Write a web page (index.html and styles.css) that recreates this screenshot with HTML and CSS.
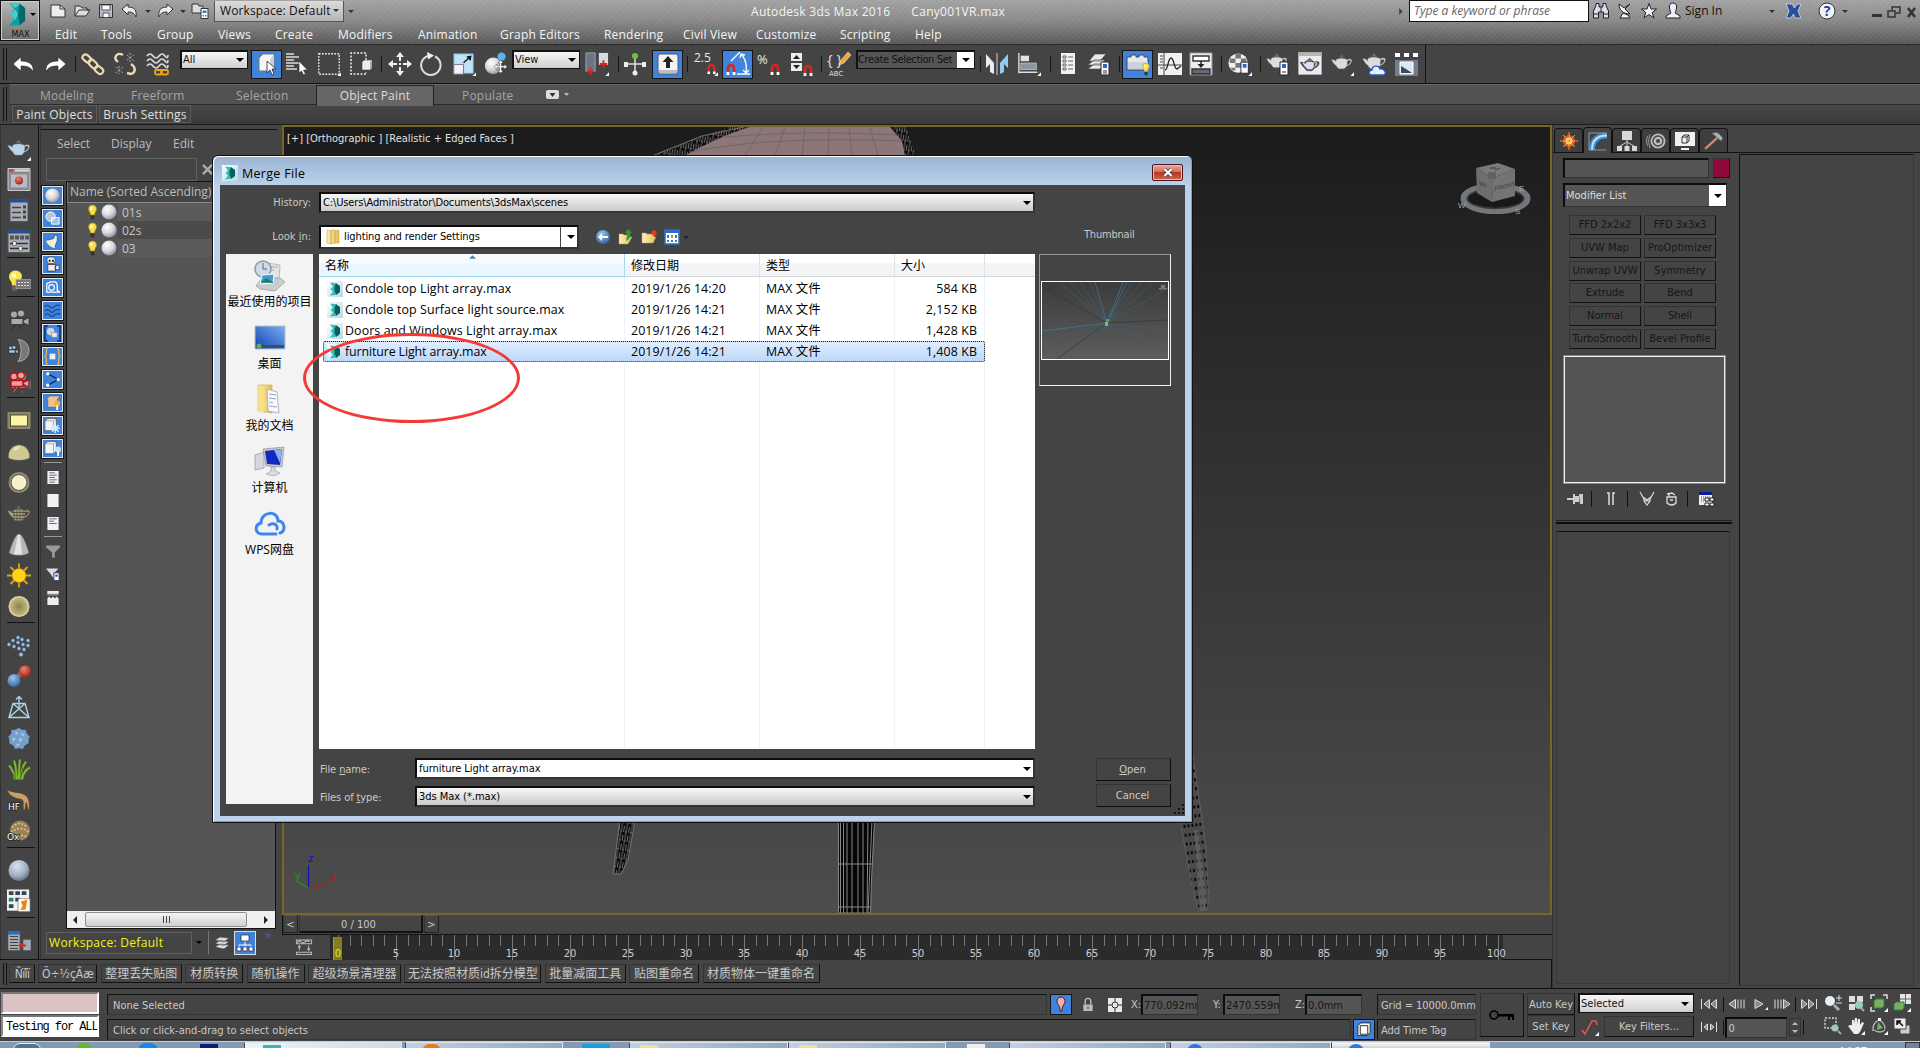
FILE: index.html
```html
<!DOCTYPE html>
<html lang="en">
<head>
<meta charset="utf-8">
<title>Autodesk 3ds Max 2016 - Cany001VR.max</title>
<link rel="stylesheet" href="styles.css">
</head>
<body>
<svg class="defs" width="0" height="0" aria-hidden="true">
  <defs>
    <linearGradient id="gTeal" x1="0" x2="1"><stop offset="0" stop-color="#3cc6bf"/><stop offset="1" stop-color="#067a80"/></linearGradient>
    <radialGradient id="gBall" cx=".38" cy=".32" r=".75"><stop offset="0" stop-color="#fff"/><stop offset=".55" stop-color="#d5d5dc"/><stop offset="1" stop-color="#85858c"/></radialGradient>
    <radialGradient id="gSteel" cx=".4" cy=".3" r=".75"><stop offset="0" stop-color="#d8e2ee"/><stop offset=".6" stop-color="#a3b1c3"/><stop offset="1" stop-color="#5f6c7e"/></radialGradient>
    <radialGradient id="gRed" cx=".4" cy=".3" r=".8"><stop offset="0" stop-color="#f08070"/><stop offset="1" stop-color="#8c1a10"/></radialGradient>
    <radialGradient id="gBlue" cx=".4" cy=".3" r=".8"><stop offset="0" stop-color="#9cc8ee"/><stop offset="1" stop-color="#2a5a92"/></radialGradient>
    <radialGradient id="gDisc"><stop offset="0" stop-color="#8d8550"/><stop offset=".75" stop-color="#b9b27a"/><stop offset="1" stop-color="#e8e3b4"/></radialGradient>
    <linearGradient id="gScreen" x1="0" y1="1" x2="1" y2="0"><stop offset="0" stop-color="#123fae"/><stop offset="1" stop-color="#79b0f2"/></linearGradient>
    <linearGradient id="gFolder" x1="0" x2="1"><stop offset="0" stop-color="#fff0b0"/><stop offset="1" stop-color="#e3bf55"/></linearGradient>
    <linearGradient id="gIce" x1="0" y1="0" x2="1" y2="1"><stop offset="0" stop-color="#ffffff"/><stop offset="1" stop-color="#b4d9e6"/></linearGradient>
  </defs>
  <symbol id="logo" viewBox="0 0 16 16"><path fill="url(#gIce)" d="M0 0h16v16H0z"/><path fill="#35bdb6" d="M3 1.500l6.500.8L12 5v6l-2.500 2.800L3 14.500l3-4L3.500 8 6 5.500z"/><path fill="#075f66" d="M9 2.300L13 5v6l-3.600 2.800L7.500 10V6z"/></symbol>
  <symbol id="teapot" viewBox="0 0 24 24"><path stroke="#555" stroke-width=".6" d="M6 9.500C7 7.500 16 7.500 17 9.500c3-1.800 6-.5 4.600 2.500-.8 1.800-2.500 3.300-5 4.200-.6 1.300-1.800 2.300-2.600 2.600H9C7.500 18 6.500 17 6.200 15.600 4 14.800 3 12 1.300 9.800 3 8.800 5 9.800 5.700 11.200zM17.500 11c.2 1.400 0 2.600-.4 3.700 2-.9 3.300-2.300 3.400-3.400 0-1.200-1.600-1.200-3-.3zM8.500 7.400c1.500-.9 5-.9 6.200 0zM10.600 6.500c0-1.700 2-1.700 2 0z"/></symbol>
  <symbol id="magnet" viewBox="0 0 10 12"><path fill="none" stroke="#d8281e" stroke-width="2.600" d="M2 9V5a3 3 0 016 0v4"/><path fill="#fff" d="M.6 9h2.800v3H.6zM6.600 9h2.800v3H6.600z"/></symbol>
  <symbol id="cam" viewBox="0 0 24 24"><circle cx="7" cy="7" r="3.600"/><circle cx="14" cy="6" r="3.600"/><path d="M4 11h12v6H4zM16 13l6-3v8l-6-3zM9 17l-4 5M11 17l4 5"/></symbol>
  <symbol id="box3" viewBox="0 0 20 18"><path fill="#f4f4f6" stroke="#444" stroke-width=".7" d="M4 4l3-2.500h9V12l-3 2.500H4z"/><path fill="none" stroke="#888" stroke-width=".7" d="M4 4h9v10.500M13 4l3-2.500"/></symbol>
  <symbol id="bulb" viewBox="0 0 12 16"><path fill="#f6df50" stroke="#a98c10" stroke-width=".6" d="M6 1a4 4 0 00-4 4c0 2 2 3.500 2 6h4c0-2.500 2-4 2-6a4 4 0 00-4-4z"/><path fill="#333" d="M4 11.500h4V14l-1 1.500H5L4 14z"/><path fill="#fffbd0" d="M4 3h2v3H4z"/></symbol>
  <symbol id="page" viewBox="0 0 14 16"><path fill="#f2f2f4" stroke="#333c48" d="M.5.500h13v15H.5z"/></symbol>
</svg>

<header class="titlebar">
  <div class="appbtn"><svg class="applogo" viewBox="0 0 22 28"><path fill="#0aa29f" d="M1 1l12 1 6 5v14l-6 5-12 1 6-8-5-5 5-6z"/><path fill="#45d0c6" d="M1 1l12 1-5 5zM2 14l6-6 3 6-3 6z"/><path fill="#05676c" d="M13 2l6 5v14l-6 5-2-12z"/></svg><b>MAX</b><i class="caret"></i></div>
  <div class="top">
    <div class="qat">
      <svg viewBox="0 0 18 16"><path fill="#eee" stroke="#333" d="M2 2h9l5 4v8H2z"/><path fill="none" stroke="#333" d="M11 2v4h5"/></svg>
      <svg viewBox="0 0 18 16"><path fill="#ddd" stroke="#333" d="M2 13V3h5l2 2h5v2h3l-4 6z"/><path fill="none" stroke="#333" d="M2 13l4-6h10"/></svg>
      <svg viewBox="0 0 18 16"><path fill="#bbc" stroke="#333" d="M2.500 1.500h13v13h-13z"/><path fill="#fff" stroke="#333" stroke-width=".8" d="M5 2h8v5H5zM6 10h6v4.500H6z"/></svg>
      <svg viewBox="0 0 18 16"><path fill="#eee" stroke="#333" d="M1 6l6-5v3c6 0 9 3 8 10-1.500-4-4-5-8-5v3z"/></svg>
      <i class="caret dim"></i>
      <svg viewBox="0 0 18 16"><path fill="#eee" stroke="#333" d="M17 6l-6-5v3c-6 0-9 3-8 10 1.500-4 4-5 8-5v3z"/></svg>
      <i class="caret dim"></i>
      <svg viewBox="0 0 18 16"><path fill="#ddd" stroke="#333" d="M1 1h6l1 2h4v7H1z"/><path fill="#fff" stroke="#333" d="M10 5.500h7v10h-7z"/><path fill="#3b7ad0" d="M11.500 7.500h4v2.500h-4zM11.500 12h1.500v1.500h-1.500zM14 12h1.500v1.500H14z"/></svg>
      <div class="wscombo"><span>Workspace: Default</span><i class="caret dim"></i></div>
      <i class="caret dim bar"></i>
    </div>
    <div class="title"><span>Autodesk 3ds Max 2016</span><span>Cany001VR.max</span></div>
    <div class="info">
      <svg class="s6" viewBox="0 0 6 10"><path fill="#444" d="M1 1l4 4-4 4z"/></svg>
      <div class="search">Type a keyword or phrase</div>
      <svg viewBox="0 0 18 18"><path fill="#dde" stroke="#222" d="M1.500 16V9L4 3.500V1.500h3V5h4V1.500h3v2L16.500 9v7h-5v-6h-5v6z"/><path stroke="#222" d="M2 12h4M12 12h4M9 5v5"/></svg>
      <svg viewBox="0 0 18 18"><path fill="#eef" stroke="#222" d="M3 2c0 6 4 10 11 10L9 7l5-5-6 4zM4 16l3-5 5 2 2 3z"/></svg>
      <svg viewBox="0 0 18 18"><path fill="#eef" stroke="#222" d="M9 1.500l2 5.500h5.500l-4.300 3.500L14 16l-5-3.500L4 16l1.800-5.500L1.500 7H7z"/></svg>
      <svg viewBox="0 0 18 18"><path fill="#eef" stroke="#222" d="M9 1C6 1 5 3 5.500 6s1 4 1.500 5l-5 3v2h14v-2l-5-3c.5-1 1-2 1.500-5S12 1 9 1z"/></svg>
      <span class="signin">Sign In</span>
      <i class="caret dim"></i>
      <svg viewBox="0 0 18 18"><path fill="#2c4f9a" stroke="#d5dcee" stroke-width=".8" d="M2 2h6l2.500 4L13 2h4l-3 7 3 7h-6l-1.500-4L7 16H2l3-7z"/></svg>
      <i class="vline"></i>
      <svg viewBox="0 0 18 18"><circle cx="9" cy="9" r="8" fill="#eef2fa" stroke="#333"/><text x="9" y="14" text-anchor="middle" class="qm">?</text></svg>
      <i class="caret dim"></i>
      <svg class="win" viewBox="0 0 46 16"><path fill="#333" d="M0 10h10v3H0z"/><path fill="none" stroke="#333" stroke-width="1.500" d="M16 7h7v6h-7zM20 6V3h8v6h-4"/><path fill="none" stroke="#333" stroke-width="2.500" d="M36 4l7 9M43 4l-7 9"/></svg>
    </div>
  </div>
  <nav class="menus"><span>Edit</span><span>Tools</span><span>Group</span><span>Views</span><span>Create</span><span>Modifiers</span><span>Animation</span><span>Graph Editors</span><span>Rendering</span><span>Civil View</span><span>Customize</span><span>Scripting</span><span>Help</span></nav>
</header>

<div class="toolrow">
 <div class="toolbar">
  <svg viewBox="0 0 24 24"><path fill="#fff" stroke="#222" stroke-width=".6" d="M1 12l8-7v4c9 0 13 4 12 11-2-5-6-6-12-6v5z"/></svg>
  <svg viewBox="0 0 24 24"><path fill="#fff" stroke="#222" stroke-width=".6" d="M23 12l-8-7v4C6 9 2 13 3 20c2-5 6-6 12-6v5z"/></svg>
  <i class="sep"></i>
  <svg viewBox="0 0 24 24"><g fill="none" stroke="#ecd9b5" stroke-width="2.200"><rect x="1.500" y="3.500" width="9" height="6" rx="3" transform="rotate(40 6 6)"/><rect x="7" y="9" width="10" height="6" rx="3" transform="rotate(45 12 12)"/><rect x="13.500" y="15" width="9" height="6" rx="3" transform="rotate(40 18 18)"/></g></svg>
  <svg viewBox="0 0 24 24"><g fill="none" stroke="#ecd9b5" stroke-width="2.400"><path d="M10 3C5 0 1 4 3 8l2 2M18 12c5 3 5 8 0 10l-4-1"/></g><path stroke="#aaa" stroke-dasharray="2 1.500" d="M14 3l7 6M14 8l7-5M3 15l7 6M3 21l7-6M17 1v9M6 14v8"/></svg>
  <svg viewBox="0 0 24 24"><path fill="none" stroke="#dadada" stroke-width="1.700" d="M2 4q3-4 6 0t6 0 6 0 3-1M2 9q3-4 6 0t6 0 6 0 3-1M2 14q3-4 6 0t6 0 6 0 3-1"/><g fill="none" stroke="#eba61c" stroke-width="1.800"><rect x="10" y="18" width="7" height="4.500" rx="1.500"/><rect x="16" y="18" width="7" height="4.500" rx="1.500"/></g></svg>
  <div class="combo"><span>All</span><i class="caret"></i></div>
  <div class="on"><svg viewBox="0 0 24 24"><path fill="#f5f5f7" stroke="#777" d="M4 6l4-4h11v14l-3 3H4z"/><path fill="#c9cfda" d="M15 7l4-4v13l-3 2.500z"/><path fill="#fff" stroke="#222" stroke-width=".8" d="M12 9v12l3-3 2 5 2-1-2-5h4z"/></svg></div>
  <svg viewBox="0 0 24 24"><path stroke="#ddd" stroke-width="1.500" d="M1 2h8M1 5h13M1 8h8M1 11h13M1 14h8M1 17h11"/><path fill="#fff" stroke="#222" stroke-width=".6" d="M14 9v12l2.500-2 2 4 2-1-2-4h4z"/></svg>
  <svg viewBox="0 0 27 27"><path fill="none" stroke="#eee" stroke-width="1.500" stroke-dasharray="2 1.500" d="M2 2h23v23H2z"/><path fill="#fff" d="M27 27h-4l4-4z"/></svg>
  <svg viewBox="0 0 24 24"><path fill="none" stroke="#eee" stroke-width="1.500" stroke-dasharray="2 1.500" d="M17 8V1H2v21h15v-2"/><path fill="#eee" stroke="#444" stroke-width=".6" d="M13 10l2-2h8v8l-2 2h-8z"/><path fill="#aab" d="M21 10l2-2v8l-2 2z"/></svg>
  <i class="sep"></i>
  <svg viewBox="0 0 24 24"><path fill="#eee" d="M12 0l4 5h-3v4h-2V5H8zM12 24l-4-5h3v-4h2v4h3zM0 12l5-4v3h4v2H5v3zM24 12l-5 4v-3h-4v-2h4V8zM11 11h2v2h-2z"/></svg>
  <svg viewBox="0 0 24 24"><path fill="none" stroke="#ddd" stroke-width="2" d="M16 4.500A9.700 9.700 0 1 1 9 4"/><path fill="#eee" d="M8 0l7 3.500-6 4z"/></svg>
  <svg viewBox="0 0 27 27"><path fill="#bfe3f7" stroke="#4aa4dc" d="M2 2h22v22H2z"/><path fill="#f2f2f5" stroke="#668" d="M2 14h11v11H2z"/><path stroke="#111" stroke-width="1.500" d="M13 12l7-6"/><path fill="#111" d="M22 4l-1 6-5-5z"/><path fill="#fff" d="M27 27h-4l4-4z"/></svg>
  <svg viewBox="0 0 26 26"><circle cx="10" cy="15" r="9" fill="url(#gBall)"/><circle cx="19" cy="5" r="4.500" fill="#5cb6ee"/><path fill="#fff" stroke="#222" stroke-width=".5" d="M18 9l3 3h-2v3h3v-2l3 3-3 3v-2h-3v3h2l-3 3-3-3h2v-3h-3v2l-3-3 3-3v2h3v-3h-2z"/></svg>
  <div class="combo"><span>View</span><i class="caret"></i></div>
  <svg viewBox="0 0 26 26"><path fill="#6a7482" stroke="#aaa" d="M1 1h10v20H1z"/><path fill="#d9dce2" d="M15 1h10v13H15z"/><path stroke="#e02020" stroke-width="2" d="M6 17v8M2 21h8M20 9v8M16 13h8"/><path fill="#fff" d="M26 26h-4l4-4z"/></svg>
  <i class="sep"></i>
  <svg viewBox="0 0 24 24"><path stroke="#ddd" stroke-width="1.500" d="M12 4v17M2 12h20"/><circle cx="12" cy="4" r="3" fill="#69c43a"/><circle cx="12" cy="21" r="2.500" fill="#eee"/><path fill="#eee" d="M1 10h4v5H1zM19 10h4v5h-4z"/></svg>
  <div class="on"><svg viewBox="0 0 24 24"><rect x="2" y="2" width="20" height="20" rx="2" fill="#f3f3f3" stroke="#556"/><path fill="#b9bcc4" d="M3 18h18v3H3z"/><path fill="#222" d="M12 4l5.500 6H14v6h-4v-6H6.500z"/></svg></div>
  <i class="sep"></i>
  <svg viewBox="0 0 26 26"><text x="0" y="11" class="snap">2.5</text><use href="#magnet" x="14" y="12" width="10" height="12"/><path fill="#fff" d="M26 26h-4l4-4z"/></svg>
  <div class="on"><svg viewBox="0 0 24 24"><use href="#magnet" x="0" y="11" width="10" height="12"/><path fill="none" stroke="#fff" stroke-width="1.300" d="M5 9l9-9M11 22h13M15 2c4 4 6 10 5 18M14 6l1-4 4 1M17 18l3 3 3-3"/></svg></div>
  <svg viewBox="0 0 24 24"><text x="0" y="12" class="snap">%</text><use href="#magnet" x="13" y="11" width="10" height="12"/></svg>
  <svg viewBox="0 0 24 24"><path fill="#ececec" d="M2 1h11v8H2zM2 11h11v8H2z"/><path fill="#222" d="M7.500 3l3.500 4H4zM7.500 17L4 13h7z"/><use href="#magnet" x="14" y="12" width="10" height="12"/></svg>
  <i class="sep"></i>
  <svg viewBox="0 0 24 24"><text x="0" y="13" class="brace">{ }</text><path fill="#f0a83c" stroke="#fff" stroke-width=".5" d="M12 13l2-5 7-8 3 3-7 8z"/><text x="2" y="24" class="abc">ABC</text></svg>
  <div class="combo sel"><span>Create Selection Set</span><i class="caret"></i></div>
  <i class="sep"></i>
  <svg viewBox="0 0 24 24"><path fill="#e8edf2" d="M1 2l8 9v11l-4-2V12l-4 4z"/><path fill="#8ccdf0" d="M23 2l-8 9v11l4-2V12l4 4z"/><path stroke="#ccc" d="M12 1v22"/></svg>
  <svg viewBox="0 0 26 26"><path stroke="#ddd" stroke-width="1.500" d="M2 1v22M2 22h20"/><path fill="#dfe3e8" d="M4 4h9v6H4z"/><path fill="#8a95a5" stroke="#ccc" stroke-width=".8" d="M4 12h17v7H4z"/><path fill="#fff" d="M26 26h-4l4-4z"/></svg>
  <i class="sep"></i>
  <svg viewBox="0 0 24 24"><path fill="#f1f1f1" d="M5 1h14v21H5z"/><path fill="none" stroke="#666" d="M7 4h3v2H7zM7 8h3v2H7zM7 12h3v2H7zM7 16h3v2H7zM12 5h5M12 9h5M12 13h5M12 17h5"/></svg>
  <svg viewBox="0 0 24 24"><path fill="#e8e8e8" stroke="#444" stroke-width=".6" d="M1 17l6-5h11l-5 5zM1 13l6-5h11l-5 5zM2 9l6-7h11l-6 7z"/><path fill="#fff" stroke="#224" d="M14 10h8v13h-8z"/><path fill="#2d67b8" d="M16 12h4v4h-4z"/><path stroke="#333" d="M16 19h4M16 21h4"/></svg>
  <i class="sep"></i>
  <div class="on"><svg viewBox="0 0 24 24"><path fill="#e6e8ec" stroke="#445" d="M1 5h4V3h5v2h3V3h5v2h4v13H1z"/><path fill="#cdd2da" d="M2 10h20v7H2z"/><use href="#bulb" x="15" y="10" width="10" height="14"/></svg></div>
  <svg viewBox="0 0 24 24"><path fill="#f1f1f1" d="M0 1h24v22H0z"/><path fill="none" stroke="#444" d="M6 1v22M0 13h24M2 4h3M2 7h3M2 10h3M2 16h3"/><path fill="none" stroke="#223" stroke-width="1.300" d="M7 18c3 0 3-12 6-12s3 11 6 11l4-3"/></svg>
  <svg viewBox="0 0 24 24"><path fill="#eee" stroke="#999" d="M1 1h22v22H1z"/><path fill="#fff" stroke="#333" stroke-width="1.400" d="M4 4h16v5H4z"/><path fill="#667" stroke="#333" stroke-width="1.400" d="M3 17h18v5H3z"/><path stroke="#222" stroke-width="1.500" d="M12 9v5"/><path fill="#222" d="M8.500 12h7L12 16z"/></svg>
  <i class="sep"></i>
  <svg viewBox="0 0 26 26"><circle cx="11" cy="12" r="10.500" fill="#f0f0f0"/><path fill="#777" d="M8 2h6v5H8zM2 7h6v5H2zM14 7h6v5h-6zM8 12h6v5H8zM2 17h6v3H5z"/><path fill="#fff" stroke="#224" d="M14 11h8v12h-8z"/><path fill="#2d67b8" d="M16 13h4v4h-4z"/><path fill="#fff" d="M26 26h-4l4-4z"/></svg>
  <i class="sep"></i>
  <svg viewBox="0 0 24 24"><use href="#teapot" x="-1" y="-3" width="24" height="24" fill="#ddd"/><path fill="#fff" stroke="#224" d="M14 10h8v13h-8z"/><path fill="#2d67b8" d="M16 12h4v4h-4z"/><path stroke="#333" d="M16 20h4"/></svg>
  <svg viewBox="0 0 24 24"><path fill="#ececf0" stroke="#aaa" d="M.5.500h23v22H.5z"/><path fill="#b8b4b0" d="M1 1h22v3H1z"/><use href="#teapot" x="1" y="1" width="22" height="23" fill="#334"/><use href="#teapot" x="3" y="3" width="18" height="19" fill="#dde"/></svg>
  <svg viewBox="0 0 26 26"><use href="#teapot" x="0" y="-2" width="26" height="26" fill="#dcdcdc"/><path fill="#fff" d="M26 26h-4l4-4z"/></svg>
  <svg viewBox="0 0 24 24"><use href="#teapot" x="-1" y="-4" width="27" height="27" fill="#dcdcdc"/><path fill="#eaf1ff" stroke="#1f58c8" stroke-width="1.300" d="M9 23c-3-1-2-5 1-5 0-5 7-5 8-1 4-1 7 4 4 6z"/></svg>
  <svg viewBox="0 0 24 24"><path fill="#fff" d="M1 1h5v4H1zM10 1h5v4h-5zM19 1h5v4h-5z"/><path fill="#747d8d" d="M1 8h23v16H1z"/><path fill="#dbe8f4" stroke="#fff" d="M6 10h13v12H6z"/><path fill="#3a4a5e" d="M7 14l5 3 6 4H7z"/></svg>
 </div>
</div>

<div class="ribbon">
  <div class="rtabs"><span>Modeling</span><span>Freeform</span><span>Selection</span><span class="act">Object Paint</span><span>Populate</span><svg viewBox="0 0 24 12"><rect y="1" width="13" height="9" rx="2" fill="#ddd"/><path fill="#333" d="M3.500 4h6L6.500 8z"/><path fill="#bbb" d="M18 4h5l-2.500 3z"/></svg></div>
  <div class="rsub"><span>Paint Objects</span><span>Brush Settings</span></div>
</div>

<main class="main">
 <div class="leftarea">
  <div class="upper">
   <aside class="vtools">
    <svg viewBox="0 0 24 31"><use href="#teapot" x="-1" y="1" width="26" height="28" fill="#bcd4ea"/><path fill="#fff" d="M24 28h-4l4-4z"/></svg>
    <svg viewBox="0 0 24 24"><path fill="#8a8a90" stroke="#ccc" d="M1 1h22v22H1z"/><path fill="#c33" d="M2 2h4v2H2z"/><path fill="#ddd" d="M8 2h14v2H8z"/><path fill="#b7bcc6" d="M4 7h16v13H4z"/><circle cx="12" cy="13" r="4" fill="url(#gRed)"/></svg>
    <svg viewBox="0 0 24 24"><path fill="#a9adb5" stroke="#555" d="M3 1h18v22H3z"/><path fill="#1d4f9c" d="M3 1h18v3H3z"/><path stroke="#444" stroke-width="1.600" d="M5 9h9M5 14h9M5 19h9"/><path fill="#444" d="M16 7h3v3h-3zM16 12h3v3h-3zM16 17h3v3h-3z"/></svg>
    <svg viewBox="0 0 24 24"><path fill="#a9adb5" stroke="#555" d="M1 1h22v22H1z"/><path fill="#1d4f9c" d="M1 1h22v3H1z"/><path fill="#555" d="M3 6h4v4H3zM8 6h4v4H8zM13 6h4v4h-4zM18 6h4v4h-4z"/><path stroke="#333" stroke-width="1.300" d="M3 14h18M3 19h18"/><path fill="#fff" stroke="#333" stroke-width=".5" d="M6 12h3v4H6zM12 17h3v4h-3z"/></svg>
    <i></i>
    <svg viewBox="0 0 24 24"><path fill="#f8e650" d="M8 2a6 6 0 00-6 6c0 4 3 4 3 9h5l4-6a6 6 0 00-6-9z"/><path fill="#fffcc8" d="M5 5h4v4H5z"/><path fill="#666" d="M5 18h5v4H5z"/><path fill="#777" stroke="#aaa" stroke-width=".7" d="M9 11h15v9H9z"/><path stroke="#ddd" d="M11 14h11M11 17h11" stroke-dasharray="2 1"/></svg>
    <i></i>
    <svg viewBox="0 0 24 24"><use href="#cam" fill="#aaa" stroke="#222" stroke-width=".7"/></svg>
    <svg viewBox="0 0 24 24"><path fill="#777" stroke="#aaa" d="M11 1a11 11 0 010 22c4-5 4-17 0-22z"/><use href="#cam" y="5" width="12" height="14" fill="#9fd0ea" stroke="#223"/></svg>
    <svg viewBox="0 0 24 24"><use href="#cam" x="1" y="1" fill="#7cc" stroke="#5aa"/><use href="#cam" fill="#e8a0a0" stroke="#b01818" stroke-width="1.600"/></svg>
    <i></i>
    <svg viewBox="0 0 24 24"><rect x="2" y="5" width="20" height="14" fill="#fbf5a8" stroke="#8c8868" stroke-width="3"/><rect x="3.500" y="6.500" width="17" height="11" fill="none" stroke="#333" stroke-width=".8"/></svg>
    <svg viewBox="0 0 24 24"><path fill="#cfca90" stroke="#555" d="M1 18C1 1 23 1 23 18c-3 4-19 4-22 0z"/><path fill="#e8e5bb" d="M6 11c1-4 6-5 8-4-3 3-5 4-8 4z"/></svg>
    <svg viewBox="0 0 24 24"><circle cx="12" cy="12" r="9" fill="#f5f2cb" stroke="#908c70" stroke-width="3"/><circle cx="12" cy="12" r="8" fill="none" stroke="#444" stroke-width=".7"/></svg>
    <svg viewBox="0 0 24 24"><use href="#teapot" x="-1" y="-2" width="26" height="28" fill="#a9a27c"/><path fill="none" stroke="#35322a" stroke-width=".6" d="M7 8v10M10 8v11M13 8v11M16 9v7M5 11h14M6 14h12M7 17h9"/></svg>
    <svg viewBox="0 0 24 24"><path fill="#b8b8b8" stroke="#555" stroke-width=".6" d="M10 2h4c4 5 6 12 8 18-2 4-18 4-20 0 2-6 4-13 8-18z"/><path fill="#e4e4e4" d="M11 2h2l2 20H7z"/></svg>
    <svg viewBox="0 0 24 24"><path stroke="#e8a015" stroke-width="1.800" d="M12 0v24M0 12h24M3.500 3.500l17 17M20.500 3.500l-17 17"/><circle cx="12" cy="12" r="7" fill="#ffd21c" stroke="#b97d0a" stroke-width=".6"/></svg>
    <svg viewBox="0 0 24 24"><circle cx="12" cy="12" r="10.500" fill="url(#gDisc)"/></svg>
    <i></i>
    <svg viewBox="0 0 24 24"><g fill="#9dbbd8" stroke="#2d3d50" stroke-width=".5"><circle cx="11" cy="4" r="2"/><circle cx="15" cy="6" r="2"/><circle cx="21" cy="7" r="2"/><circle cx="6" cy="7" r="2"/><circle cx="11" cy="9" r="2"/><circle cx="16" cy="11" r="2"/><circle cx="21" cy="12" r="2"/><circle cx="2" cy="11" r="2"/><circle cx="7" cy="13" r="2"/><circle cx="12" cy="15" r="2"/><circle cx="17" cy="16" r="2"/><circle cx="14" cy="21" r="2.300"/></g></svg>
    <svg viewBox="0 0 24 24"><path stroke="#a06070" stroke-width="5" d="M8 15l8-8"/><circle cx="7" cy="16" r="6.500" fill="url(#gBlue)"/><circle cx="18" cy="7" r="6" fill="url(#gRed)"/></svg>
    <svg viewBox="0 0 24 24"><path fill="none" stroke="#a8d3e8" stroke-width="1.400" d="M2 22h20L18 8H6zM2 22L18 8M22 22L6 8M12 14V1M9 4l3-3 3 3"/></svg>
    <svg viewBox="0 0 24 24"><path fill="#789fc8" stroke="#26405e" stroke-width=".6" d="M12 1l3 2 4 0 1 4 3 3-1 3 0 4-4 2-2 4-4-1-4 1-2-4-4-2 0-4-1-3 3-3 0-4 4 0z"/><path fill="#a9c8e5" d="M8 5l3 1-2 3zM14 6l4 2-3 2zM5 11l4 1-3 3zM12 11l4 2-4 3zM9 17l4 1-3 2z"/></svg>
    <svg viewBox="0 0 24 24"><path fill="none" stroke="#7db92c" stroke-width="2" d="M8 22C7 15 5 11 2 8M10 22C9 13 9 8 7 3M12 22c0-8 0-14 1-20M14 22c0-7 2-14 5-18M15 22c1-6 4-10 8-12"/><path stroke="#3e7010" d="M9 22l-4-7M13 22l3-12"/></svg>
    <svg viewBox="0 0 24 24"><path fill="#c8a26a" stroke="#4a3a22" stroke-width=".5" d="M0 1c5 4 12 2 17 5 5 2 6 9 5 16-2-1-1-6-3-8-1 3 0 6-2 8-2-5 1-8-2-11C9 10 2 8 0 1z"/><text x="1" y="21" class="tag">HF</text></svg>
    <svg viewBox="0 0 24 24"><circle cx="13" cy="11" r="10" fill="#9b8158"/><path fill="none" stroke="#dcc79c" stroke-dasharray="2 1.500" stroke-width="1.500" d="M5 8q8-8 15 0M4 13q9-8 18 0M8 19q6-6 12-1"/><text x="0" y="20" class="tag">Ox</text></svg>
    <i></i>
    <svg viewBox="0 0 24 24"><circle cx="12" cy="12" r="10.500" fill="url(#gSteel)"/></svg>
    <svg viewBox="0 0 26 26"><path fill="#f0f0f0" d="M0 0h24v23H0z"/><g fill="#345"><path d="M2 2h5v4H2zM9 2h5v4H9zM16 2h5v4h-5zM9 9h5v4H9zM2 16h5v4H2z"/></g><path fill="#1a8a70" d="M2 9h5v4H2z"/><path fill="#fff" stroke="#555" stroke-width=".6" d="M12 10h13v14H12z"/><path fill="#ee8418" d="M15 13l7-2-1 6-1 5-6 0 3-4z"/></svg>
    <i></i>
    <svg viewBox="0 0 24 24"><path fill="#a4abb6" stroke="#555" stroke-width=".6" d="M1 3h12v19H1z"/><path fill="#1d6fc0" d="M1 3h12v3H1z"/><path stroke="#444" d="M3 8h8M3 11h8M3 14h8M3 17h8M3 20h8"/><path fill="#a4abb6" stroke="#555" stroke-width=".6" d="M16 11h8v11h-8z"/><path fill="#d92a1a" d="M11 17l4-3v2h4v2h-4v2z"/></svg>
   </aside>

   <section class="explorer">
    <div class="exmenu"><span>Select</span><span>Display</span><span>Edit</span></div>
    <div class="exfind"><div class="field"></div><svg viewBox="0 0 12 12"><path stroke="#aaa" stroke-width="2.600" d="M1 1l10 10M11 1L1 11"/></svg></div>
    <div class="exbody">
     <div class="filters">
      <b><svg viewBox="0 0 20 18"><circle cx="10" cy="9" r="7.500" fill="url(#gBall)"/></svg></b>
      <b><svg viewBox="0 0 20 18"><circle cx="8" cy="7" r="5" fill="#b9c3d4" stroke="#fff"/><path fill="#dfe4ee" fill-opacity=".6" stroke="#fff" d="M9 8h8v7H9z"/></svg></b>
      <b><svg viewBox="0 0 20 18"><path fill="#eee" stroke="#333" stroke-width=".6" d="M13 2l2 1v5l-3 8L3 8l8-2z"/><path fill="#f7ecb4" d="M3 8c1 4 6 8 10 8L8 9z"/></svg></b>
      <b><svg viewBox="0 0 20 18"><rect x="4" y="1" width="9" height="7" rx="3" fill="#eee" stroke="#333" stroke-width=".8"/><path fill="#eee" stroke="#333" stroke-width=".8" d="M5 9h8v7H5zM13 11l4-2v6l-4-1z"/><path fill="#222" d="M6 4h2v2H6zM9.500 4h2v2h-2z"/></svg></b>
      <b><svg viewBox="0 0 20 18"><path fill="none" stroke="#fff" stroke-width="1.300" d="M17 14H4V5l4-2h4c3 0 3 3 3 5v4l3 2"/><circle cx="9" cy="9" r="3" fill="none" stroke="#fff" stroke-width="1.300"/></svg></b>
      <b><svg viewBox="0 0 20 18"><path fill="none" stroke="#1d4788" stroke-width="1.300" d="M2 5q2.500-3 5 0t5 0 6-1M2 9.500q2.500-3 5 0t5 0 6-1M2 14q2.500-3 5 0t5 0 6-1"/></svg></b>
      <b><svg viewBox="0 0 20 18"><path fill="none" stroke="#0e2c60" stroke-width="1.500" d="M5 1H2v16h3M15 1h3v16h-3"/><circle cx="8" cy="7" r="4" fill="#cfd6e2"/><path fill="#e6eaf1" stroke="#777" stroke-width=".5" d="M9 8h6v5H9z"/></svg></b>
      <b><svg viewBox="0 0 20 18"><path fill="none" stroke="#e0b04a" stroke-width="1.500" d="M5 1H3.500v6L2 9l1.500 2v6H5M15 1h1.500v6L18 9l-1.500 2v6H15"/><path fill="#f0f0f0" d="M7 6h6v6H7z"/></svg></b>
      <b><svg viewBox="0 0 20 18"><path fill="none" stroke="#0e1c40" stroke-width="1.300" d="M5 3l11 6-11 6"/><g fill="#fff"><circle cx="5" cy="3" r="1.700"/><circle cx="16" cy="9" r="1.700"/><circle cx="5" cy="15" r="1.700"/></g></svg></b>
      <b><svg viewBox="0 0 20 18"><path fill="#e7c59a" stroke="#6b4e2a" stroke-width=".6" d="M3 6l4-4h11l-3 4v8H5V6z"/><circle cx="15" cy="10" r="3" fill="#ffb01c"/><path stroke="#fff" stroke-width="2" d="M15 12v5"/></svg></b>
      <b><svg viewBox="0 0 20 18"><use href="#box3" x="-2"/><path stroke="#cdeeff" stroke-width="1.600" d="M13 7v10M8 12h10M9.500 8.500l7 7M16.500 8.500l-7 7"/></svg></b>
      <b><svg viewBox="0 0 20 18"><use href="#box3" x="-2"/><circle cx="16" cy="10" r="3" fill="#bfe4fb"/><path stroke="#fff" stroke-width="2" d="M16 12v5"/></svg></b>
      <i></i>
      <em><svg viewBox="0 0 14 16"><use href="#page"/><path stroke="#555" stroke-width=".9" d="M3 3h6M3 5.500h8M3 8h6M3 10.500h8M3 13h6"/></svg></em>
      <em><svg viewBox="0 0 14 16"><use href="#page"/></svg></em>
      <em><svg viewBox="0 0 14 16"><use href="#page"/><path stroke="#555" stroke-width=".9" d="M3 3h8M3 8h8M3 5.500h5"/></svg></em>
      <i></i>
      <em><svg viewBox="0 0 16 16"><path fill="#999" d="M0 1h16v2l-6 6v6H7V9L0 3z"/></svg></em>
      <em><svg viewBox="0 0 16 16"><path fill="#ddd" d="M0 1h14L9 7v6L5 7z"/><path fill="#fff" stroke="#235" d="M9 6h6v9H9z"/><path fill="#2d67b8" d="M10.500 8h3v2.500h-3z"/></svg></em>
      <em><svg viewBox="0 0 14 16"><path fill="#888" d="M1 1h12v5H1z"/><path fill="#eee" d="M1 1h12v3H1zM1 9l2-2 2 2 2-2 2 2 2-2 2 2v7H1z"/></svg></em>
     </div>
     <div class="tree">
      <div class="thead">Name (Sorted Ascending)</div>
      <div class="node"><svg class="bl" viewBox="0 0 12 16"><use href="#bulb"/></svg><svg class="ob" viewBox="0 0 16 16"><circle cx="8" cy="8" r="7.500" fill="url(#gBall)"/></svg><span>01s</span></div>
      <div class="node alt"><svg class="bl" viewBox="0 0 12 16"><use href="#bulb"/></svg><svg class="ob" viewBox="0 0 16 16"><circle cx="8" cy="8" r="7.500" fill="url(#gBall)"/></svg><span>02s</span></div>
      <div class="node"><svg class="bl" viewBox="0 0 12 16"><use href="#bulb"/></svg><svg class="ob" viewBox="0 0 16 16"><circle cx="8" cy="8" r="7.500" fill="url(#gBall)"/></svg><span>03</span></div>
      <div class="hscroll"><svg viewBox="0 0 6 8"><path fill="#222" d="M5 0v8L1 4z"/></svg><div class="thumb"><u></u><u></u><u></u></div><svg viewBox="0 0 6 8"><path fill="#222" d="M1 0v8l4-4z"/></svg></div>
     </div>
    </div>
    <div class="exfoot"><div class="ws">Workspace: Default</div><i class="caret"></i><i class="vs"></i><svg viewBox="0 0 16 16"><path fill="#ddd" stroke="#444" stroke-width=".6" d="M1 12l5-3 9 1-5 4zM1 8.500l5-3 9 1-5 4zM1 5l5-3 9 1-5 4z"/></svg><b><svg viewBox="0 0 18 20"><path fill="none" stroke="#fff" d="M9 8v4M3 14v-2h12v2M9 12v2"/><path fill="#fff" stroke="#223" stroke-width=".7" d="M5 2h8v6H5zM1 14h4v4H1zM7 14h4v4H7zM13 14h4v4h-4z"/></svg></b><span>»</span></div>
   </section>

   <section class="vpcol">
    <div class="viewport">
     <svg class="scene" viewBox="284 127 1266 786" width="1266" height="786">
      <defs>
       <pattern id="mesh" width="5" height="9" patternUnits="userSpaceOnUse" patternTransform="rotate(10)"><path fill="#0a0a0a" d="M0 0h5v9H0z"/><path stroke="#777" stroke-width=".9" d="M1 0v9M3.500 3v6M0 8.500h2"/></pattern>
       <pattern id="mesh2" width="4" height="9" patternUnits="userSpaceOnUse" patternTransform="rotate(-7)"><path fill="#0a0a0a" d="M0 0h4v9H0z"/><path stroke="#757575" stroke-width="1.200" d="M1 0v9M3 3v6"/></pattern>
      </defs>
      <path fill="url(#mesh)" d="M652 156l34-14 44-15h30l-60 29zM894 127h12l10 29h-12z"/>
      <path fill="#8b7779" d="M684 156c22-12 40-21 66-29h140l12 14 3 15z"/>
      <path fill="none" stroke="#6f6062" stroke-width=".8" d="M690 152c60-12 130-14 212-11M725 137c60-5 110-5 172-2M745 156l18-29M775 156l10-29M802 156l3-29M828 156l1-29M852 156l-3-29M878 156l-8-29"/>
      <path fill="none" stroke="#807072" d="M652 156l50-20 42-9"/>
      <path fill="url(#mesh)" stroke="#777" d="M620 820h15l-7 40-7 14h-8z"/>
      <path fill="#050505" stroke="#888" d="M838.500 820h36l-3 60-1 33h-32z"/>
      <path stroke="#888" stroke-width="1" d="M840.500 820v93M843.500 820v93M847 820v93M852 820v93M858 820v93M863 820v93M868 820l-1 93M872 820l-4 93M838 864h35M838 907h33"/>
      <path fill="url(#mesh2)" stroke="#666" stroke-width=".7" d="M1179 815l12-75 4 30 10 70 4 60-2 10-8 1-6-20z"/>
      <path fill="#6b6b6b" d="M1194 830l4 0 9 72-2 8-5 0z" opacity=".6"/>
      <g fill="none" stroke-width="1.200"><path stroke="#1512c0" d="M308.500 888v-23"/><path stroke="#c41414" d="M308.500 888l21.500-5"/><path stroke="#14a014" d="M308.500 888l-12-7"/></g>
      <g class="axis"><text x="308" y="862" fill="#1512c0">z</text><text x="330" y="881" fill="#c41414">x</text><text x="295" y="879" fill="#14a014">y</text></g>
      <ellipse cx="1495.500" cy="198.500" rx="32" ry="12.500" fill="#191919" stroke="#74767b" stroke-width="6"/>
      <ellipse cx="1495.500" cy="198.500" rx="28" ry="10" fill="none" stroke="#3c3d40" stroke-width="1.500"/>
      <path fill="#7a7a7a" d="M1476 168l22-5 17 6-22 9z"/><path fill="#6e6e6e" d="M1476 168l17 10-1 24-15-9z"/><path fill="#747474" d="M1493 178l22-9v27l-23 6z"/>
      <path fill="#5f6369" d="M1488 172h8v7h-8z"/><path stroke="#4b4d51" stroke-width="1.300" d="M1490 168l6 0M1495 170l5-2"/>
      <g class="cube"><text transform="translate(1494.500 191) skewY(-14)">FRONT</text><text transform="translate(1479 185) skewY(22)">WI</text></g>
      <g class="compass"><text x="1458" y="208">W</text><text x="1515" y="214">S</text><text x="1519" y="191">E</text></g>
     </svg>
     <div class="vplabel">[+] [Orthographic ] [Realistic + Edged Faces ]</div>
    </div>
    <div class="slider"><span class="ar">&lt;</span><span class="knob">0 / 100</span><span class="ar">&gt;</span></div>
    <div class="track">
     <div class="trkicon"><svg viewBox="0 0 18 18"><path fill="none" stroke="#bbb" stroke-width="1.100" d="M1 1h16v4H1zM1 14h16v2.500H1zM2 4q2-3 4-1t4 0 5 0M4 12V7M2.500 9L4 7l1.500 2M14 7v5M12.500 10l1.500 2 1.500-2"/></svg></div>
     <div class="tk first"><mark>0</mark></div><div class="tk">5</div><div class="tk">10</div><div class="tk">15</div><div class="tk">20</div><div class="tk">25</div><div class="tk">30</div><div class="tk">35</div><div class="tk">40</div><div class="tk">45</div><div class="tk">50</div><div class="tk">55</div><div class="tk">60</div><div class="tk">65</div><div class="tk">70</div><div class="tk">75</div><div class="tk">80</div><div class="tk">85</div><div class="tk">90</div><div class="tk">95</div><div class="tk last">100</div>
    </div>
   </section>
  </div>
  <div class="scripts"><span class="w1">Ñïîï</span><span class="w2">Ö÷½çÃæ</span><span class="w3">整理丢失贴图</span><span class="w4">材质转换</span><span class="w5">随机操作</span><span class="w6">超级场景清理器</span><span class="w7">无法按照材质id拆分模型</span><span class="w8">批量减面工具</span><span class="w9">贴图重命名</span><span class="w10">材质物体一键重命名</span></div>
 </div>

 <section class="command">
  <div class="ctabs">
   <b><svg viewBox="0 0 20 20"><circle cx="10" cy="10" r="6" fill="#e0581a"/><circle cx="10" cy="10" r="3.500" fill="#fff2a8"/><path stroke="#f39a3a" d="M10 1v18M1 10h18M4 4l12 12M16 4L4 16"/></svg></b>
   <b class="act"><svg viewBox="0 0 20 20"><path fill="none" stroke="#3d8fd4" stroke-width="6" d="M4 19C4 10 9 4.500 19 4.500"/><path fill="none" stroke="#bfe4fa" stroke-width="2" d="M4 19C4 10 9 4.500 19 4.500"/><path fill="none" stroke="#aaa" stroke-width=".8" d="M1 2v17h17M1 2h17"/></svg></b>
   <b><svg viewBox="0 0 20 20"><path fill="#d8d8d8" d="M5 0h10v9H5zM0 15h5v5H0zM7.500 15h5v5h-5zM15 15h5v5h-5z"/><path fill="none" stroke="#ccc" d="M10 9v6M10 11l-7 4M10 11l7 4"/></svg></b>
   <b><svg viewBox="0 0 20 20"><circle cx="12" cy="10" r="7.500" fill="#bbb"/><circle cx="12" cy="10" r="5" fill="none" stroke="#444" stroke-width="1.300"/><circle cx="12" cy="10" r="2" fill="#444"/><path fill="none" stroke="#999" d="M4 3q-3 7 0 14M1.500 5q-2 5 0 10"/></svg></b>
   <b><svg viewBox="0 0 20 20"><path fill="#eef0f2" d="M0 1h20v14H0zM6 17h8v2H6z"/><path fill="none" stroke="#333" d="M7 6l2-2h5v6l-2 2H7zM7 6h5v6M12 6l2-2"/></svg></b>
   <b><svg viewBox="0 0 20 20"><path stroke="#b86a5a" stroke-width="2.600" d="M1 18L13 7"/><path stroke="#e8c8c0" stroke-width=".8" d="M2 17L13 7"/><path fill="#a8b0b8" stroke="#555" stroke-width=".5" d="M8 3c4-3 7-1 9 2l2 2-2 3-5-4c-1-2-2-2-4-3z"/></svg></b>
  </div>
  <div class="cbody">
   <div class="ccol">
    <div class="nameRow"><div class="field"></div><div class="swatch"></div></div>
    <div class="modlist"><span>Modifier List</span><i><u class="caret"></u></i></div>
    <div class="mods"><span>FFD 2x2x2</span><span>FFD 3x3x3</span><span>UVW Map</span><span>ProOptimizer</span><span>Unwrap UVW</span><span>Symmetry</span><span>Extrude</span><span>Bend</span><span>Normal</span><span>Shell</span><span>TurboSmooth</span><span>Bevel Profile</span></div>
    <div class="stack"></div>
    <div class="stackbar">
     <svg viewBox="0 0 16 16"><path fill="#ccc" d="M0 7h6v2H0zM6 3h2v10H6zM8 5h4v6H8zM12 3h2l2 0v10h-3z"/></svg><i></i>
     <svg viewBox="0 0 16 16"><path stroke="#ddd" stroke-width="1.500" fill="none" d="M4 2h2v12M10 14V2h2"/></svg><i></i>
     <svg viewBox="0 0 16 16"><path fill="none" stroke="#ddd" stroke-width="1.200" d="M1 1l5 9M15 1l-5 9M4 6l4 3 4-3M5 10l3 4 3-4z"/></svg>
     <svg viewBox="0 0 16 16"><path fill="none" stroke="#ddd" stroke-width="1.300" d="M4 6h9v6q-4 4-9 0zM4 3l5-1 3 2M6 5V3M7 9h3"/></svg><i></i>
     <svg viewBox="0 0 16 16"><path fill="#eee" d="M0 1h13v13H0z"/><path fill="#0a1da0" d="M0 1h13v3H0z"/><path stroke="#555" stroke-dasharray="1 1" d="M2 6h9M2 8h9M2 10h9"/><path fill="#fff" stroke="#222" d="M6 7h4v3H6zM6 12h4v3H6zM11 12h4v3h-4zM11 7h4v3h-4z"/></svg>
    </div>
    <div class="rollbar"></div>
    <div class="rollbox"></div>
   </div>
   <div class="ccol2"></div>
  </div>
 </section>
</main>

<footer class="status">
 <div class="listener"><div class="pink"></div><div class="white">Testing for ALL</div></div>
 <div class="mid">
  <div class="r1">
   <div class="box msg">None Selected</div>
   <b class="blue"><svg viewBox="0 0 18 18"><path fill="#f0b0b0" stroke="#401818" d="M9 1a4.500 4.500 0 00-4 6c1 3 3 3 3 9h2c0-6 2-6 3-9a4.500 4.500 0 00-4-6z"/></svg></b>
   <svg class="lock" viewBox="0 0 12 16"><path fill="none" stroke="#bbb" stroke-width="1.500" d="M3 8V4.500a3 3 0 016 0V8"/><path fill="#bbb" d="M1 8h10v7H1z"/><path fill="#333" d="M5.500 10h1v3h-1z"/></svg>
   <svg class="tgt" viewBox="0 0 14 16"><path fill="#e8e8e8" d="M0 1h14v14H0z"/><circle cx="7" cy="8" r="3" fill="none" stroke="#333"/><path stroke="#333" d="M7 1v4M7 11v4M0 8h4M10 8h4"/></svg>
   <label>X:</label><div class="num">770.092mm</div><label>Y:</label><div class="num">2470.559mm</div><label>Z:</label><div class="num">0.0mm</div>
   <div class="box grid">Grid = 10000.0mm</div>
  </div>
  <div class="r2">
   <div class="box msg2">Click or click-and-drag to select objects</div>
   <b class="blue"><svg viewBox="0 0 18 18"><path fill="#fff" stroke="#222" d="M2.500 5l3-3h10v10l-3 3.500h-10z"/><path fill="none" stroke="#222" d="M5 5h8v9H5z"/></svg></b>
   <div class="box grid">Add Time Tag</div>
  </div>
 </div>
 <div class="keybtn"><svg viewBox="0 0 26 12"><circle cx="5" cy="6" r="4" fill="none" stroke="#000" stroke-width="1.600"/><path fill="#000" d="M9 5h16v6h-2V8h-2v3h-2V7.500H9z"/></svg></div>
 <div class="keys"><span>Auto Key</span><span>Set Key</span></div>
 <div class="keyset"><div class="combo"><span>Selected</span><i class="caret"></i></div><div class="kf"><svg viewBox="0 0 18 18"><path fill="none" stroke="#e05a5a" stroke-width="1.500" d="M1 12l3 4L11 3h4l1 4"/><path fill="#fff" d="M18 18h-4l4-4z"/></svg><span>Key Filters...</span></div></div>
 <div class="play">
  <div class="p1">
   <svg viewBox="0 0 18 12"><path fill="#888" stroke="#ddd" d="M1.500 1v10M9.500 1.500v9L4 6zM16.500 1.500v9L11 6z"/></svg><i></i>
   <svg viewBox="0 0 18 12"><path fill="#888" stroke="#ddd" d="M7.500 1.500v9L1 6zM10 1.500v9M13 1.500v9M16 1.500v9"/></svg>
   <svg viewBox="0 0 18 12"><path fill="#888" stroke="#ddd" d="M5 1.500v9L13 6z"/><path fill="#fff" d="M18 12h-3l3-3z"/></svg>
   <svg viewBox="0 0 18 12"><path fill="#888" stroke="#ddd" d="M2 1.500v9M5 1.500v9M8 1.500v9M10.500 1.500v9L17 6z"/></svg><i></i>
   <svg viewBox="0 0 18 12"><path fill="#888" stroke="#ddd" d="M1.500 1.500v9L7 6zM8.500 1.500v9L14 6zM16.500 1v10"/></svg>
  </div>
  <div class="p2">
   <svg viewBox="0 0 18 12"><path fill="#888" stroke="#ddd" d="M1.500 1v10M7.500 3v6L4 6zM10.500 3v6L14 6zM16.500 1v10"/></svg><i></i><div class="frame">0</div><div class="spin"><u class="up"></u><u class="caret"></u></div><i></i>
  </div>
 </div>
 <div class="nav">
  <svg viewBox="0 0 18 18"><circle cx="6" cy="7" r="5" fill="#e6eef6"/><path stroke="#aaa" stroke-width="3" d="M10 11l5 5"/><path stroke="#ddd" d="M12 4h6M15 1v6M12 9h6"/></svg>
  <svg viewBox="0 0 18 18"><path fill="#ddd" d="M2 2h6v6H2zM10 2h6v6h-6zM2 10h6v6H2z"/><circle cx="12" cy="11" r="4" fill="#9cb"/><path stroke="#aaa" stroke-width="2" d="M14 14l3 3"/></svg>
  <svg viewBox="0 0 18 18"><path fill="none" stroke="#ddd" stroke-width="1.500" d="M1 5V1h4M13 1h4v4M1 13v4h4"/><path fill="#7cae62" stroke="#283" d="M4 7l2-2h8v7l-2 2H4z"/><path fill="#fff" d="M18 18h-4l4-4z"/></svg>
  <svg viewBox="0 0 18 18"><path fill="#e6e6ea" d="M7 0h11v10H7z"/><path stroke="#666" d="M12.500 0v10M7 5h11"/><path fill="#7cae62" stroke="#283" d="M1 10l2-2h8v6l-2 2H1z"/><path fill="#fff" d="M18 18h-4l4-4z"/></svg>
  <svg viewBox="0 0 18 18"><path fill="none" stroke="#ddd" stroke-dasharray="2 1.500" stroke-width="1.400" d="M1 1h11v10H1z"/><circle cx="11" cy="11" r="3.500" fill="#9cb"/><path stroke="#aaa" stroke-width="2" d="M14 14l3 3"/></svg>
  <svg viewBox="0 0 18 18"><path fill="#eee" d="M5 8V3h2v4l1-6h2v6l1-5h2v6l2-3 2 1-4 9-2 2H7L1 9l2-1z"/><path fill="#fff" d="M18 18h-4l4-4z"/></svg>
  <svg viewBox="0 0 18 18"><path fill="none" stroke="#bbb" stroke-width="1.300" d="M3 14Q2 6 9 3M15 13q-5 4-11 0M9 3q6 3 6 9"/><path fill="#7cae62" d="M8 5l5 6-6 2z"/><path fill="#fff" d="M18 18h-4l4-4zM8 1h3v3H8z"/></svg>
  <svg viewBox="0 0 18 18"><path fill="#ccc" stroke="#444" d="M7 8h10v9H7z"/><path fill="#eee" stroke="#444" d="M1 1h12v11H1z"/><path stroke="#111" stroke-width="1.500" d="M5 4l5 5M4 8V4h4"/></svg>
 </div>
</footer>
<div class="taskbar"><i class="orb"></i><i class="dot green"></i><i class="dot azure"></i><i class="sq navy"></i><s class="tb a"><i class="sq teal"></i></s><s class="tb b"><i class="dot orange"></i></s><i class="sq cyan"></i><s class="tb c"><i class="sq sand"></i></s><s class="tb d"><i class="sq sand"></i></s><i class="sq white"></i><s class="tb e"></s><s class="tb f"><i class="dot bl2"></i></s><s class="tb g"><i class="dot bl2"></i></s><span class="clock">14:27</span><s class="desk"></s></div>

<div class="dialog">
 <div class="dtitle"><svg viewBox="0 0 16 16"><use href="#logo"/></svg><span>Merge File</span><b><svg viewBox="0 0 12 10"><path stroke="#4a4a58" stroke-width="4" d="M2 1l8 8M10 1L2 9"/><path stroke="#fff" stroke-width="2.300" d="M2 1l8 8M10 1L2 9"/></svg></b></div>
 <div class="dbody">
  <div class="drow hist"><label>History:</label><div class="dcombo g"><span>C:\Users\Administrator\Documents\3dsMax\scenes</span><i class="caret"></i></div></div>
  <div class="drow look"><label>Look <u>i</u>n:</label><div class="dcombo w"><svg viewBox="0 0 14 16"><path fill="url(#gFolder)" stroke="#c9a94a" stroke-width=".6" d="M1 1l4 1v13l-4-1zM5 1h4v13l-4 1zM9 2l4-1v13H9z"/></svg><span>lighting and render Settings</span><i class="caret"></i></div>
   <div class="dicons">
    <svg viewBox="0 0 16 16"><circle cx="8" cy="8" r="7" fill="url(#gBlue)"/><path fill="#fff" d="M3 8l4-4v3h6v2H7v3z"/></svg>
    <svg viewBox="0 0 16 16"><path fill="url(#gFolder)" stroke="#a98" stroke-width=".5" d="M1 5h4l1 1h3v2h5l-4 7H1z"/><path fill="#2ca02c" d="M10 0l4 4h-2v4q-1 3-4 4l1-5V4H7z"/></svg>
    <svg viewBox="0 0 16 16"><path fill="url(#gFolder)" stroke="#a98" stroke-width=".5" d="M1 4h4l1 1h7v3h2l-3 6H1z"/><path stroke="#f03a1a" stroke-width="1.200" d="M13 1v6M10 4h6M11 2l4 4M15 2l-4 4"/></svg>
    <svg viewBox="0 0 16 16"><path fill="#fff" stroke="#2a6fd0" stroke-width="1.500" d="M1 1h14v14H1z"/><path fill="#2a6fd0" d="M1 1h14v3H1z"/><path fill="#3a78d0" d="M3 6h2v3H3zM11 6h2v3h-2zM3 11h2v2H3zM7 11h2v2H7z"/><path fill="#e07a2a" d="M7 6h2v3H7z"/><path fill="#3a9a4a" d="M11 11h2v2h-2z"/></svg>
    <i class="caret"></i>
   </div>
   <div class="thl">Thumbnail</div>
  </div>
  <div class="dcontent">
   <div class="places">
    <div><svg viewBox="0 0 32 32"><path fill="#e2e5e8" stroke="#999" stroke-width=".6" d="M14 3l12 2-1 14H12z"/><path stroke="#aab" d="M16 7h8M16 10h4"/><circle cx="9" cy="9" r="8" fill="#cfdbe6" stroke="#8b9aa8" stroke-width="1.500"/><path fill="none" stroke="#567" d="M9 3v6h4"/><path fill="#c9cccf" stroke="#888" stroke-width=".6" d="M2 26l6-8h18l5 4-10 9-15-2z"/><path fill="#3d9fd6" stroke="#fff" d="M8 15l12-1-1 9-13 1z"/><path fill="#2f7a52" d="M7 22l5-4 7 4v1z"/></svg><span>最近使用的项目</span></div>
    <div><svg viewBox="0 0 32 32"><path fill="url(#gScreen)" stroke="#b9c2cc" d="M1 4h30v23H1z"/><path fill="#35506e" d="M2 23h28v3H2z"/><circle cx="5" cy="24" r="2.500" fill="#5fb04a"/></svg><span>桌面</span></div>
    <div><svg viewBox="0 0 32 32"><path fill="url(#gFolder)" stroke="#caa84a" stroke-width=".6" d="M4 1h14v28L4 27z"/><path fill="#f7f9fc" stroke="#99a" stroke-width=".7" d="M13 5l10 3 2 21-11-2z"/><path stroke="#8fa8c8" d="M15 10l7 1M15 14l7 1M15 18l4 1M15 22l8 1"/><path fill="#f6e08a" d="M4 1l6 3v25l-6-2z"/></svg><span>我的文档</span></div>
    <div><svg viewBox="0 0 32 32"><path fill="#d4d7dc" stroke="#888" stroke-width=".6" d="M1 9l9-3v16l-9 2z"/><path fill="#c6c9ce" stroke="#888" stroke-width=".6" d="M9 3l21-2-2 20-16-1z"/><path fill="#1428c0" d="M11 5l17-2-2 16-13-1z"/><path fill="#8fb0f0" d="M20 4l8-1-2 14z"/><path fill="#d9dbde" stroke="#999" stroke-width=".6" d="M17 21h4v4l5 2-6 3-8-2 5-3z"/></svg><span>计算机</span></div>
    <div><svg viewBox="0 0 32 32"><path fill="none" stroke="#3f86f4" stroke-width="3" stroke-linecap="round" d="M22 26H8C1 26 0 17 7 15 7 3 24 2 24 13c7 0 8 10 2 12M15 17c5-3 9 0 8 4"/></svg><span>WPS网盘</span></div>
   </div>
   <div class="dmid">
    <div class="files">
     <div class="fh"><span class="c1">名称<svg viewBox="0 0 8 4"><path fill="#4a86ac" d="M4 0l4 4H0z"/></svg></span><span class="c2">修改日期</span><span class="c3">类型</span><span class="c4">大小</span></div>
     <div class="frows">
      <div class="fr"><svg viewBox="0 0 16 16"><use href="#logo"/></svg><span class="n">Condole top Light array.max</span><span class="d">2019/1/26 14:20</span><span class="y">MAX 文件</span><span class="z">584 KB</span></div>
      <div class="fr"><svg viewBox="0 0 16 16"><use href="#logo"/></svg><span class="n">Condole top Surface light source.max</span><span class="d">2019/1/26 14:21</span><span class="y">MAX 文件</span><span class="z">2,152 KB</span></div>
      <div class="fr"><svg viewBox="0 0 16 16"><use href="#logo"/></svg><span class="n">Doors and Windows Light array.max</span><span class="d">2019/1/26 14:21</span><span class="y">MAX 文件</span><span class="z">1,428 KB</span></div>
      <div class="fr cur"><svg viewBox="0 0 16 16"><use href="#logo"/></svg><span class="n">furniture Light array.max</span><span class="d">2019/1/26 14:21</span><span class="y">MAX 文件</span><span class="z">1,408 KB</span></div>
     </div>
    </div>
    <div class="frow"><label>File <u>n</u>ame:</label><div class="dcombo w"><span>furniture Light array.max</span><i class="caret"></i></div></div>
    <div class="frow two"><label>Files of <u>t</u>ype:</label><div class="dcombo g"><span>3ds Max (*.max)</span><i class="caret"></i></div></div>
   </div>
   <div class="dright">
    <div class="thumbbox"><svg viewBox="0 0 126 77"><defs><linearGradient id="gT" x2="0" y2="1"><stop offset="0" stop-color="#3c3c3c"/><stop offset="1" stop-color="#5c5c5c"/></linearGradient></defs><path fill="url(#gT)" d="M0 0h126v77H0z"/><g fill="none" stroke="#3d6f88" stroke-width=".6" opacity=".7"><path d="M65 41L17 0M65 41L28 0M65 41L38 0M65 41L47 0M65 41L126 6M65 41L112 0M65 41L100 0M65 41L90 0M65 41L126 48M65 41L126 66M65 41L0 49M65 41L0 60M65 41L20 77M65 41L45 77M65 41L80 77M65 41L105 77"/><path stroke="#3f7d9c" stroke-width="1" d="M65 41L53 0M65 41L81 0M65 41L85 0M65 41L0 49"/></g><path stroke="#333" stroke-width=".6" d="M65 41L0 4M65 41l61-3M65 41L15 77"/><path fill="#5cc0b0" d="M63 40h3v4h-3z"/><path fill="#8e8a30" d="M64 37h3v3h-3z"/><path fill="#777" d="M119 3h4v3h-4zM117 6h8v1.500h-8z"/></svg></div>
    <div class="dbtns"><span><u>O</u>pen</span><span>Cancel</span></div>
    <svg class="grip" viewBox="0 0 12 12"><path fill="#111" d="M9 1h2v2H9zM9 5h2v2H9zM5 5h2v2H5zM9 9h2v2H9zM5 9h2v2H5zM1 9h2v2H1z"/></svg>
   </div>
  </div>
 </div>
</div>
<div class="marker"></div>
</body>
</html>
```
FILE: styles.css
```css
* { box-sizing: border-box; }
html, body { margin: 0; height: 1048px; overflow: hidden; }
body {
  width: 1920px; background: #444; color: #c8c8c8; display: flex; flex-direction: column;
  font: 11px/14px "DejaVu Sans Condensed", "Noto Sans CJK SC", sans-serif;
}
svg { display: block; flex: none; }
.defs { position: absolute; }
i, em { font-style: normal; }
.caret { display: block; flex: none; width: 0; height: 0; border: 4px solid transparent; border-top-color: #000; border-bottom: 0; }
.caret.dim { border-width: 3px 3px 0; border-top-color: #333; }

/* title bar */
.titlebar {
  height: 45px; flex: none; display: grid; grid-template: 24px 20px / 40px 1fr;
  background: repeating-linear-gradient(135deg, rgba(255,255,255,.04) 0 2px, transparent 2px 4px), linear-gradient(#a2a2a2, #8a8a8a 45%, #585858);
  border-bottom: 1px solid #2a2a2a; font-family: "Open Sans", sans-serif; font-size: 12px; color: #f4f4f4;
}
.appbtn {
  grid-row: 1 / 3; height: 41px; border: 1px solid #111; background: linear-gradient(#b9b9b9, #707070); color: #111;
  display: grid; grid-template: 27px 12px / 29px 10px; align-items: center; box-shadow: inset 0 0 0 1px #ccc;
}
.applogo { width: 22px; height: 25px; margin-left: 6px; }
.appbtn b { order: 3; grid-column: 1 / 3; font: 9px/10px "DejaVu Sans Condensed"; text-align: center; }
.appbtn .caret { border-width: 3px 3px 0; }
.top { display: flex; height: 24px; }
.qat { display: flex; align-items: center; width: 711px; padding-left: 9px; height: 22px; }
.qat svg { width: 18px; height: 16px; margin-right: 6px; }
.qat .caret { margin: 0 5px 0 0; }
.wscombo { width: 130px; height: 21px; margin: 0 4px 0 -1px; padding: 0 4px 0 5px; display: flex; align-items: center; justify-content: space-between; background: linear-gradient(#dcdcdc, #b4b4b4); border: 1px solid #555; border-top: 0; color: #111; }
.wscombo span { width: 113px; white-space: nowrap; letter-spacing: .1px; }
.wscombo .caret.dim { margin: 0; }
.caret.bar { box-shadow: 0 -5px 0 -3px #333; }
.title { display: flex; width: 618px; line-height: 24px; white-space: nowrap; gap: 21px; letter-spacing: .3px; }
.info { display: flex; align-items: center; height: 22px; flex: 1; margin-left: -7px; }
.info svg { width: 18px; height: 18px; margin-right: 6px; }
.info .s6 { width: 6px; height: 9px; margin: 0 5px 0 36px; }
.search { width: 180px; height: 22px; border: 1px solid #111; background: #fff; color: #666; font-style: italic; line-height: 20px; padding-left: 4px; margin-right: 3px; }
.signin { color: #111; width: 84px; margin-left: -3px; }
.info .caret { margin-right: 9px; }
.info .vline { width: 1px; height: 20px; background: #999; margin: 0 8px 0 1px; }
.qm { font: bold 14px "Open Sans"; fill: #1e3f9a; }
.info .win { width: 46px; height: 16px; margin: 2px 0 0 15px; }
.menus { grid-column: 2; display: grid; grid-template-columns: 46px 56px 61px 57px 63px 80px 82px 104px 79px 73px 84px 75px 60px; padding-left: 15px; line-height: 22px; letter-spacing: .2px; white-space: nowrap; }

/* main toolbar */
.toolrow { height: 39px; flex: none; border-bottom: 1px solid #111; }
.toolbar {
  width: 1426px; height: 38px; padding-left: 12px; border-right: 1px solid #111; align-items: center; display: grid;
  background: linear-gradient(90deg, transparent 3px, #111 3px 4px, transparent 4px 6px, #111 6px 7px, transparent 7px) 0 3px / 10px 32px no-repeat;
  grid-template-columns: 31px 32px 6px 32px 32px 35px 71px 34px 32px 32px 32px 7px 31px 33px 32px 28px 73px 33px 5px 29px 35px 7px 28px 35px 32px 32px 6px 29px 124px 5px 32px 33px 6px 31px 32px 3px 36px 31px 32px 7px 32px 6px 32px 32px 32px 32px 31px;
}
.toolbar svg { width: 24px; height: 24px; }
.toolbar .sep { width: 1px; height: 16px; background: #151515; }
.on { width: 31px; height: 29px; border: 1px solid #161616; background: #3f83dd; display: grid; place-items: center; }
.combo { width: 68px; height: 19px; border: 1px solid #111; border-top-width: 2px; border-left-width: 2px; background: linear-gradient(#f6f6f6, #cfcfcf); color: #111; display: flex; align-items: center; justify-content: space-between; padding: 0 3px 0 1px; white-space: nowrap; }
.toolbar .combo { align-self: start; margin-top: 5px; }
.toolbar .sel { width: 119px; background: #fff; padding: 0 4px 0 0; }
.sel span { background: #555; width: 99px; overflow: hidden; line-height: 16px; letter-spacing: -.35px; }
.snap { font: 13px "Open Sans"; fill: #e8e8e8; }
.brace { font: 15px "Open Sans"; fill: #ddd; }
.abc { font: 7px "DejaVu Sans"; fill: #ddd; }
.tag { font: 9px "DejaVu Sans"; fill: #fff; stroke: #222; stroke-width: 1.5px; paint-order: stroke; }

/* ribbon */
.ribbon { height: 41px; flex: none; border-bottom: 1px solid #1c1c1c; font: 12px/20px "Open Sans", sans-serif; letter-spacing: .2px;
  background: linear-gradient(90deg, transparent 3px, #111 3px 4px, transparent 4px 6px, #111 6px 7px, transparent 7px) 0 3px / 10px 34px no-repeat; }
.rtabs { margin-left: 10px; height: 21px; display: grid; grid-template-columns: 92px 105px 109px 118px 112px 30px; background: #525252; border-top: 1px solid #6a6a6a; border-bottom: 1px solid #2b2b2b; color: #a5a5a5; }
.rtabs span { padding-left: 29px; line-height: 21px; }
.rtabs span:first-child { padding-left: 30px; }
.rtabs span:nth-child(5) { padding-left: 28px; }
.rtabs .act { padding: 0; text-align: center; background: #666; border: 1px solid #222; border-bottom: 0; color: #ddd; height: 21px; line-height: 19px; }
.rtabs svg { width: 24px; height: 12px; margin-top: 4px; }
.rsub { margin-left: 10px; height: 19px; padding-left: 2px; display: flex; gap: 2px; background: linear-gradient(#474747, #3a3a3a); }
.rsub span { width: 85px; height: 18px; line-height: 17px; text-align: center; border: 1px solid #5b5b5b; background: #444; color: #e0e0e0; white-space: nowrap; }
.rsub span + span { width: 92px; }

/* work area */
.main { height: 864px; flex: none; display: flex; }
.leftarea { width: 1552px; }
.upper { height: 835px; display: flex; border-bottom: 1px solid #111; }
.vtools { width: 39px; padding-top: 8px; border-right: 1px solid #111; border-left: 1px solid #333; }
.vtools svg { width: 24px; height: 31px; margin-left: 6px; }
.vtools > i { display: block; height: 8px; margin-left: 6px; width: 28px; border-top: 1px solid #111; }

.explorer { width: 243px; padding-top: 4px; border-left: 1px solid #333; margin-left: 1px; }
.exmenu { border-top: 1px solid #111; height: 28px; padding: 7px 0 0 16px; display: grid; grid-template-columns: 54px 62px 60px; font: 12px/14px "Open Sans", sans-serif; color: #bdbdbd; width: 236px; }
.exfind { display: flex; align-items: center; gap: 5px; padding-left: 5px; height: 24px; }
.exfind .field { width: 151px; height: 23px; border: 1px solid #606060; }
.exfind svg { width: 11px; height: 11px; }
.exbody { display: flex; height: 748px; }
.filters { width: 25px; padding-top: 5px; }
.filters b { display: block; width: 21px; height: 19px; margin: 0 0 4px 1px; border: 1px solid #e3e9f3; background: #3f83dd; outline: 1px solid #151515; }
.filters b svg { width: 19px; height: 17px; }
.filters > i { display: block; height: 4px; width: 18px; margin: 1px 0 0 3px; border-top: 1px solid #999; }
.filters em { display: grid; place-items: center; height: 23px; width: 23px; }
.filters em svg { width: 14px; height: 15px; }
.tree { width: 210px; height: 748px; border: 1px solid #111; background: #555; display: flex; flex-direction: column; font-family: "Open Sans", sans-serif; font-size: 12px; }
.thead { height: 21px; line-height: 19px; padding-left: 2px; background: #444; border-bottom: 1px solid #8a8a8a; border-left: 1px solid #777; color: #bdbdbd; letter-spacing: 0; white-space: nowrap; }
.node { height: 18px; display: flex; align-items: center; padding-left: 19px; background: linear-gradient(90deg, #555 51px, #5b5b5b 51px); }
.node.alt { background: linear-gradient(90deg, #555 51px, #4b4b4b 51px); }
.node .bl { width: 13px; height: 16px; }
.node .ob { width: 16px; height: 16px; margin: 0 5px 0 2px; }
.node span { line-height: 19px; }
.hscroll { margin-top: auto; height: 17px; background: #efefef; display: flex; align-items: center; padding: 0 6px 0 5px; }
.hscroll svg { width: 6px; height: 8px; }
.thumb { flex: 1; height: 15px; margin: 0 16px 0 7px; border: 1px solid #8e8e8e; background: linear-gradient(#f5f5f5, #cfcfcf); border-radius: 2px; display: flex; gap: 2px; align-items: center; justify-content: center; }
.thumb u { width: 1px; height: 7px; background: #444; }
.exfoot { display: flex; align-items: center; height: 26px; padding: 1px 0 0 5px; }
.ws { width: 146px; height: 22px; border: 1px solid #606060; color: #f4f413; font: 12px/20px "Open Sans", sans-serif; padding-left: 2px; letter-spacing: .3px; }
.exfoot .caret { margin: 0 6px 0 4px; border-width: 3px 3px 0; }
.exfoot .vs { width: 1px; height: 23px; background: #777; margin-right: 5px; }
.exfoot > svg { width: 16px; height: 16px; margin-right: 4px; }
.exfoot b { width: 22px; height: 24px; border: 1px solid #ddd; background: #3f83dd; padding: 1px; }
.exfoot b svg { width: 18px; height: 20px; }
.exfoot span { color: #5a5aa0; margin: -16px 0 0 8px; font-size: 14px; }

.vpcol { width: 1270px; margin-left: -1px; }
.viewport { height: 790px; border: 2px solid #7a6527; background: linear-gradient(#1b1b1b, #2a2a2a 28%, #4d4d4d); position: relative; }
.vplabel { position: absolute; left: 3px; top: 5px; color: #e0e0e0; letter-spacing: 0; }
.axis text { font: 11px "Liberation Sans"; }
.cube text { font: bold 6px "Liberation Sans"; fill: #4a4c52; }
.compass text { font: 8px "Liberation Sans"; fill: #a5a7ab; }
.slider { height: 19px; display: flex; gap: 1px; border-left: 1px solid #111; }
.slider span { height: 18px; line-height: 17px; text-align: center; border: 1px solid #222; border-left-color: #333; border-top-color: #555; }
.slider .ar { width: 15px; }
.slider .knob { width: 124px; border-right: 2px solid #111; border-bottom: 2px solid #111; padding-right: 4px; }
.track { height: 26px; display: flex; border-top: 1px solid #111; }
.trkicon { width: 48px; padding: 4px 0 0 13px; }
.trkicon svg { width: 18px; height: 17px; }
.tk {
  flex: none; width: 58px; height: 25px; text-align: center; padding-top: 12px; line-height: 14px; font-size: 11px; background-color: #2b2b2b; background-repeat: no-repeat; color: #ccc;
  background-image: linear-gradient(#777, #777), linear-gradient(#777, #777), linear-gradient(#777, #777), linear-gradient(#777, #777), linear-gradient(#777, #777);
  background-size: 1px 25px, 1px 11px, 1px 11px, 1px 11px, 1px 11px;
  background-position: 29px 0, 6px 0, 17px 0, 41px 0, 52px 0;
}
.tk.first { width: 37px; padding: 2px 0 0 3px; background-position: 8px 0, -9px 0, -9px 0, 20px 0, 31px 0; }
.tk.first mark { display: block; width: 9px; height: 23px; padding-top: 10px; background: #857e1d; color: #e6e34c; border-left: 1px solid #a59e30; }
.tk.last { width: 34px; padding-left: 18px; background-position: 29px 0, 6px 0, 17px 0, -9px 0, -9px 0; }

.scripts { height: 29px; padding: 4px 0 0 9px; border-bottom: 1px solid #111; border-right: 1px solid #111; display: flex; gap: 3.400px;
  background: linear-gradient(90deg, transparent 3px, #111 3px 4px, transparent 4px 6px, #111 6px 7px, transparent 7px) 0 3px / 10px 22px no-repeat; }
.scripts span { height: 19px; line-height: 18px; border: 1px solid #333; border-right-color: #111; border-bottom-color: #111; text-align: center; white-space: nowrap; font-size: 12px; flex: none; }
.w1 { width: 26px; } .w2 { width: 59px; } .w3 { width: 81px; } .w4 { width: 58px; } .w5 { width: 58px; } .w6 { width: 93px; } .w7 { width: 137px; } .w8 { width: 81px; } .w9 { width: 70px; } .w10 { width: 117px; }
.scripts .w1 { letter-spacing: -.6px; }

/* command panel */
.command { width: 368px; border-bottom: 1px solid #111; border-left: 1px solid #333; }
.ctabs { height: 28px; padding: 3px 0 0 1px; display: flex; border-bottom: 1px solid #111; }
.ctabs b { width: 29px; height: 24px; border: 1px solid #111; border-bottom: 0; border-radius: 4px 4px 0 0; display: grid; place-items: center; background: #3e3e3e; }
.ctabs .act { height: 26px; margin-top: -1px; background: #444; }
.ctabs svg { width: 20px; height: 20px; }
.cbody { display: flex; }
.ccol { width: 186px; padding: 5px 0 0 3px; }
.nameRow { display: flex; gap: 4px; padding-left: 7px; }
.nameRow .field { width: 146px; height: 20px; background: #555; border: 1px solid #333; border-top: 2px solid #0c0c0c; border-left: 2px solid #0c0c0c; }
.swatch { width: 17px; height: 20px; background: #8d0a3a; border: 1px solid #333; border-right-color: #111; border-bottom-color: #111; }
.modlist { margin: 5px 0 8px 7px; width: 164px; height: 24px; background: #555; border: 1px solid #333; border-top: 2px solid #0c0c0c; border-left: 2px solid #0c0c0c; display: flex; justify-content: space-between; line-height: 21px; color: #ddd; padding-left: 1px; }
.modlist i { width: 17px; background: #fff; display: grid; place-items: center; }
.mods { margin-left: 13px; display: grid; grid-template-columns: 72px 72px; grid-auto-rows: 20px; gap: 2.800px 3px; }
.mods span { border: 1px solid #333; border-right-color: #111; border-bottom-color: #111; color: #161616; text-align: center; line-height: 18px; white-space: nowrap; }
.stack { margin: 7px 0 0 8px; width: 161px; height: 127px; background: #555; border: 1px solid #f2f2f2; outline: 1px solid #888; }
.stackbar { display: flex; align-items: center; height: 32px; padding-left: 11px; }
.stackbar svg { width: 16px; height: 16px; margin-right: 8px; }
.stackbar i { width: 1px; height: 16px; background: #111; margin-right: 11px; }
.rollbar { margin-top: 5px; height: 4px; width: 176px; border-top: 1px solid #222; border-bottom: 2px solid #0c0c0c; }
.rollbox { margin-top: 7px; width: 174px; height: 453px; border: 1px solid #383838; border-top-color: #111; }
.ccol2 { width: 175px; height: 832px; margin-top: 1px; border: 1px solid #383838; border-top-color: #111; border-left: 1px solid #111; }

/* status area */
.status { height: 52px; flex: none; display: flex; }
.listener { width: 107px; padding: 3px 0 0 1px; flex: none; }
.listener div { width: 98px; height: 22px; border: 2px solid #fff; border-top-color: #777; border-left-color: #888; }
.listener .pink { background: #dcc3c3; }
.listener .white { background: #fff; color: #000; font: 12px/20px "Liberation Mono", monospace; margin-top: 1px; padding-left: 3px; overflow: hidden; white-space: nowrap; letter-spacing: -1.100px; }
.mid { width: 1370px; padding-top: 5px; flex: none; }
.r1, .r2 { display: flex; align-items: center; height: 21px; }
.r2 { margin-top: 4px; }
.r1 > *, .r2 > * { flex: none; }
.box { height: 21px; border: 1px solid #363636; border-top-color: #111; border-left-color: #111; line-height: 21px; padding-left: 5px; white-space: nowrap; }
.msg { width: 940px; }
.msg2 { width: 1244px; }
.blue { width: 22px; height: 21px; background: #3f83dd; border: 1px solid #151515; padding: 1px; margin-left: 3px; }
.blue svg { width: 18px; height: 17px; }
.lock { width: 12px; height: 15px; margin: 0 14px 0 10px; }
.tgt { width: 14px; height: 16px; margin-right: 9px; }
.r1 label { width: 10px; white-space: nowrap; line-height: 16px; }
.num { width: 57px; height: 21px; background: #555; border: 1px solid #333; border-top: 2px solid #0c0c0c; border-left: 2px solid #0c0c0c; color: #161616; line-height: 19px; overflow: hidden; padding-left: 1px; margin-right: 15px; white-space: nowrap; }
.grid { width: 99px; padding-left: 3px; letter-spacing: -.05px; }
.r2 .grid { margin-left: 2px; }
.r2 .blue { margin-left: 2px; }
.keybtn { flex: none; margin: 4px 0 0 3px; width: 44px; height: 44px; border: 1px solid #333; border-right-color: #111; border-bottom-color: #111; display: grid; place-items: center; }
.keybtn svg { width: 26px; height: 12px; }
.keys { margin: 4px 0 0 3px; width: 48px; flex: none; }
.keys span { display: block; height: 22px; line-height: 22px; border: 1px solid #333; border-bottom-color: #111; border-right-color: #111; text-align: center; white-space: nowrap; }
.keyset { margin: 4px 0 0 3px; width: 117px; flex: none; }
.keyset .combo { width: 116px; height: 20px; padding-right: 4px; }
.kf { display: flex; margin-top: 3px; justify-content: space-between; }
.kf svg { width: 18px; height: 18px; margin: 2px 0 0 3px; }
.kf span { width: 90px; height: 21px; line-height: 20px; border: 1px solid #333; border-right-color: #111; border-bottom-color: #111; text-align: center; margin-right: 1px; }
.play { margin: 5px 0 0 5px; width: 107px; flex: none; }
.p1, .p2 { display: flex; align-items: center; height: 20px; width: 120px; }
.p2 { margin-top: 3px; }
.play svg { width: 18px; height: 12px; margin-right: 4.500px; }
.play i { width: 1px; height: 15px; background: #111; margin-right: 4px; flex: none; }
.p2 i { margin-right: 0; }
.frame { width: 62px; height: 21px; background: #555; border: 1px solid #333; border-top: 2px solid #0c0c0c; border-left: 2px solid #0c0c0c; padding-left: 2px; line-height: 19px; margin-left: 1px; }
.spin { width: 12px; height: 18px; display: flex; flex-direction: column; gap: 5px; align-items: center; justify-content: center; margin: 0 2px; border: 1px solid #333; flex: none; }
.spin .up { border: 3px solid transparent; border-bottom-color: #bbb; border-top: 0; }
.spin .caret { border-width: 3px 3px 0; border-top-color: #bbb; }
.nav { margin: 5px 0 0 17px; display: grid; grid-template-columns: repeat(4, 23px); grid-auto-rows: 23px; }
.nav svg { width: 18px; height: 18px; }

/* desktop taskbar, top edge */
.taskbar { height: 7px; flex: none; overflow: hidden; background: #8399b4; border-top: 1px solid #b8d0e4; display: flex; align-items: flex-start; }
.taskbar > *, .tb i { flex: none; display: block; }
.orb { width: 28px; height: 14px; margin: 1px 0 0 13px; border-radius: 14px; background: #53748f; border: 1px solid #cfe; }
.dot { width: 16px; height: 16px; border-radius: 8px; margin-top: 1px; }
.green { background: #62b822; margin-left: 35px; }
.azure { background: #1c86e8; margin-left: 46px; width: 20px; }
.sq { width: 18px; height: 10px; margin-top: 2px; }
.navy { background: #101a78; margin-left: 42px; }
.tb { height: 8px; border: 1px solid #dbe6f0; border-left-color: #445; background: linear-gradient(90deg, #c3d0de, #94a8bf); }
.a { width: 158px; margin-left: 26px; background: linear-gradient(90deg, #eef3f8, #cfdae6); } .b { width: 158px; margin-left: 3px; }
.teal { background: #35b7b8; margin-left: 18px; }
.orange { background: #ee7a12; margin-left: 16px; width: 19px; }
.cyan { background: #1b9ed8; margin: 2px 19px 0; width: 28px; }
.c { width: 159px; } .d { width: 158px; }
.sand { background: #eddf9c; margin-left: 10px; }
.taskbar .white { background: #eee; width: 18px; margin: 2px 24px 0 21px; }
.e { width: 157px; } .f { width: 161px; margin-left: 4px; } .g { width: 159px; }
.bl2 { background: #2f76e0; margin-left: 16px; }
.clock { color: #fff; margin-left: 349px; font: 11px/12px "Open Sans"; margin-top: 3px; }
.desk { margin-left: auto; width: 15px; height: 8px; background: #72839a; border: 1px solid #333; }

/* merge dialog */
.dialog {
  position: absolute; left: 212px; top: 155px; width: 981px; height: 668px; padding: 0 7px 7px; border: 1px solid #111; border-radius: 6px 6px 0 0;
  background: linear-gradient(#9ab4d2, #bcd2ea 30px, #bcd2ea); box-shadow: inset 1px 1px 0 #fff, inset -1px -1px 0 #25c4e6; color: #c8c8c8;
}
.dtitle { height: 29px; display: flex; align-items: center; padding: 5px 2px 0 2px; font: 12.500px/16px "Open Sans", sans-serif; color: #000; }
.dtitle svg { width: 16px; height: 16px; }
.dtitle span { margin: 2px 0 0 4px; letter-spacing: .3px; }
.dtitle b { margin: -2px 0 0 auto; width: 31px; height: 17px; border: 1px solid #4a1420; border-radius: 2px; background: linear-gradient(#e8a89c, #d4705c 45%, #b8341c 50%, #d06850); display: grid; place-items: center; box-shadow: inset 0 0 0 1px #f0b8b0; }
.dtitle b svg { width: 12px; height: 9px; }
.dbody { background: #444; height: 631px; padding-top: 7px; }
.drow { display: flex; align-items: center; }
.drow label { width: 99px; padding-right: 8px; text-align: right; line-height: 16px; }
.dcombo { border: 2px solid #333; border-top-color: #0c0c0c; border-left-color: #0c0c0c; display: flex; align-items: center; justify-content: space-between; color: #000; padding: 1px 2px 0 2px; white-space: nowrap; }
.g { background: linear-gradient(#f8f8f8, #cacaca); }
.w { background: #fff; }
.hist .dcombo { width: 716px; height: 21px; letter-spacing: -.13px; }
.look { margin-top: 12px; height: 24px; }
.look .dcombo { width: 260px; height: 24px; padding: 0 2px 0 5px; background: linear-gradient(90deg, #fff 239px, #444 239px 240px, #fff 240px); }
.look .dcombo svg { width: 14px; height: 16px; margin-right: 4px; }
.look .dcombo span { flex: 1; letter-spacing: -.1px; line-height: 16px; }
.dicons { display: flex; align-items: center; gap: 7px; padding-left: 16px; width: 505px; flex: none; }
.dicons svg { width: 16px; height: 16px; }
.dicons .caret { margin-left: -4px; border-top-color: #222; border-width: 3px 3px 0; }
.thl { width: 80px; margin-top: -5px; flex: none; letter-spacing: -.2px; }
.dcontent { display: flex; margin-top: 5px; padding-left: 6px; }
.places { width: 87px; height: 550px; background: #f3f3f3; color: #000; padding-top: 6px; font: 12px/16px "Open Sans", "Noto Sans CJK SC", sans-serif; white-space: nowrap; flex: none; }
.places div { height: 62px; display: flex; flex-direction: column; align-items: center; }
.places svg { width: 32px; height: 32px; }
.places span { margin-top: 2px; }
.dmid { width: 716px; margin-left: 6px; flex: none; }
.files { height: 495px; background: #fff; color: #000; font: 12.400px/20px "Open Sans", "Noto Sans CJK SC", sans-serif; }
.fh { display: grid; grid-template-columns: 306px 135px 135px 90px 50px; height: 23px; border-bottom: 1px solid #d5d5d5; background: linear-gradient(#fff 40%, #f3f4f6 45%); line-height: 23px; font-size: 12px; }
.fh span { padding-left: 6px; border-right: 1px solid #dfe3e8; height: 23px; }
.fh .c1 { background: linear-gradient(#f7fbfd 40%, #e9f6fd 45%); border-right-color: #a5d9ef; border-bottom: 1px solid #a5d9ef; display: flex; }
.c1 svg { width: 7px; height: 4px; margin: 1px 0 0 120px; }
.frows { height: 472px; padding-top: 1px; background: linear-gradient(90deg, transparent 305px, #eaf2fa 305px 306px, transparent 306px 440px, #eaf2fa 440px 441px, transparent 441px 575px, #eaf2fa 575px 576px, transparent 576px 665px, #eaf2fa 665px 666px, transparent 666px); }
.fr { height: 21px; margin: 0 50px 0 4px; display: grid; grid-template-columns: 22px 286px 135px 135px 72px; align-items: center; padding-left: 4px; letter-spacing: .1px; white-space: nowrap; }
.fr svg { width: 16px; height: 16px; }
.fr .n { margin-left: -4px; }
.fr .d, .fr .y { margin-left: -4px; }
.fr .z { text-align: right; }
.cur { background: linear-gradient(#e0edfd, #bcd8fb); border: 1px dotted #111; padding-left: 3px; border-radius: 2px; }
.cur .n { letter-spacing: -.12px; }
.frow { display: flex; align-items: center; margin-top: 9px; height: 21px; }
.frow.two { margin-top: 7px; }
.frow label { width: 96px; padding-left: 1px; line-height: 17px; padding-top: 1px; letter-spacing: -.1px; }
.frow .dcombo { width: 620px; height: 21px; letter-spacing: -.05px; }
.dright { padding-left: 4px; width: 150px; flex: none; }
.thumbbox { width: 132px; height: 132px; border: 1px solid #f2f2f2; border-top-color: #999; border-left-color: #999; display: grid; place-items: center; }
.thumbbox svg { width: 128px; height: 79px; border: 1px solid #fff; }
.dbtns { margin: 372px 0 0 57px; display: flex; flex-direction: column; gap: 3px; }
.dbtns span { width: 75px; height: 23px; line-height: 22px; text-align: center; border: 1px solid #333; border-right-color: #0c0c0c; border-bottom-color: #0c0c0c; padding-right: 2px; }
.grip { width: 12px; height: 12px; margin: -4px 0 0 134px; }
.marker { position: absolute; left: 303px; top: 333px; width: 217px; height: 90px; border: 3px solid #f43a36; border-radius: 50%; }
```
